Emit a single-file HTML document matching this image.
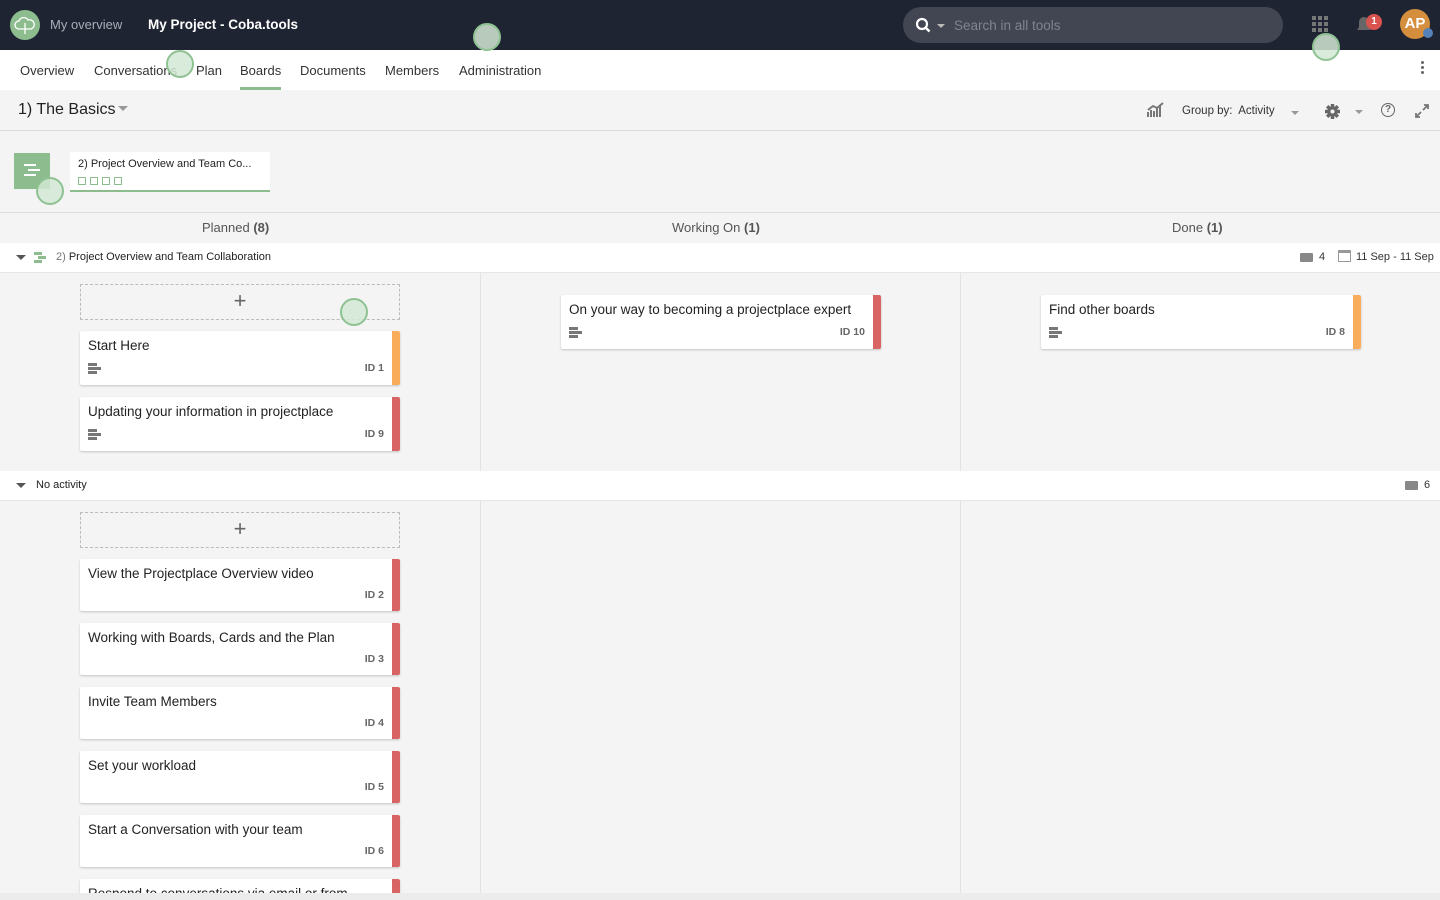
<!DOCTYPE html>
<html style="overflow:hidden;width:1440px;height:900px"><head><meta charset="utf-8"><style>
*{box-sizing:border-box;margin:0;padding:0}
body{width:1440px;height:900px;overflow:hidden;background:#f4f4f4;font-family:"Liberation Sans",sans-serif;color:#222;position:relative}
.abs{position:absolute}
.top{left:0;top:0;width:1440px;height:50px;background:#1f2433}
.tabs{left:0;top:50px;width:1440px;height:40px;background:#fff}
.tabs span{position:absolute;top:13px;font-size:13px;color:#333}
.card{position:absolute;width:320px;background:#fff;box-shadow:0 1px 2px rgba(0,0,0,.2);border-radius:2px}
.card .t{position:absolute;left:8px;top:7px;font-size:13.5px;color:#222}
.card .id{position:absolute;right:16px;font-size:10.5px;font-weight:bold;color:#666}
.card .s{position:absolute;right:0;top:0;bottom:0;width:8px;border-radius:0 2px 2px 0}
.ic{position:absolute;left:8px;width:14px;height:12px}
.ic i{position:absolute;left:0;height:2.5px;background:#777}
.add{position:absolute;left:80px;width:320px;height:36px;border:1px dashed #bbb;text-align:center;font-size:22px;line-height:32px;color:#666;font-weight:300}
.circ{position:absolute;width:28px;height:28px;border-radius:50%;border:2px solid #8fc293;background:rgba(210,232,212,.85)}
.vl{position:absolute;width:1px;background:#e2e2e2}
</style></head><body>
<div class="abs top"></div>
<div class="abs" style="left:10px;top:10px;width:30px;height:30px;border-radius:50%;background:#8dbd8e"></div>
<svg class="abs" style="left:14px;top:15px" width="22" height="20" viewBox="0 0 22 20"><path d="M5 14a4 4 0 0 1 0-8 5 5 0 0 1 9-1 4 4 0 0 1 3 9z M11 8v11" fill="none" stroke="#fff" stroke-width="1.3"/></svg>
<div class="abs" style="left:50px;top:17px;font-size:13px;color:#a9adb6">My overview</div>
<div class="abs" style="left:148px;top:17px;font-size:13.5px;color:#fff;font-weight:bold">My Project - Coba.tools</div>
<div class="abs" style="left:903px;top:7px;width:380px;height:36px;border-radius:18px;background:#424653"></div>
<svg class="abs" style="left:915px;top:17px" width="30" height="18"><circle cx="7" cy="7" r="5" fill="none" stroke="#fff" stroke-width="2.2"/><path d="M10.5 10.5l4 4" stroke="#fff" stroke-width="2.4"/><path d="M22 7h8l-4 4z" fill="#bbb"/></svg>
<div class="abs" style="left:954px;top:18px;font-size:13.5px;color:#80848e">Search in all tools</div>
<svg class="abs" style="left:1312px;top:16px" width="18" height="18"><g fill="#777"><rect x="0" y="0" width="4" height="4"/><rect x="6" y="0" width="4" height="4"/><rect x="12" y="0" width="4" height="4"/><rect x="0" y="6" width="4" height="4"/><rect x="6" y="6" width="4" height="4"/><rect x="12" y="6" width="4" height="4"/><rect x="0" y="12" width="4" height="4"/><rect x="6" y="12" width="4" height="4"/><rect x="12" y="12" width="4" height="4"/></g></svg>
<svg class="abs" style="left:1356px;top:16px" width="16" height="18"><path d="M8 1a5 5 0 0 1 5 5v5l2 3H1l2-3V6a5 5 0 0 1 5-5z" fill="#666"/></svg>
<div class="abs" style="left:1366px;top:14px;width:16px;height:16px;border-radius:50%;background:#d9534f;color:#fff;font-size:10px;font-weight:bold;text-align:center;line-height:16px">1</div>
<div class="abs" style="left:1400px;top:9px;width:30px;height:30px;border-radius:50%;background:#d48e3d;color:#fff;font-size:15px;font-weight:bold;text-align:center;line-height:30px">AP</div>
<div class="abs" style="left:1423px;top:28px;width:10px;height:10px;border-radius:50%;background:#5582b8"></div>

<div class="abs tabs">
<span style="left:20px">Overview</span><span style="left:94px">Conversations</span><span style="left:196px">Plan</span><span style="left:240px">Boards</span><span style="left:300px">Documents</span><span style="left:385px">Members</span><span style="left:459px">Administration</span>
<div class="abs" style="left:240px;top:37px;width:41px;height:3px;background:#8dbd8e"></div>
<div class="abs" style="left:1421px;top:11px;width:3px;height:3px;background:#666;border-radius:50%;box-shadow:0 5px 0 #666,0 10px 0 #666"></div>
</div>
<div class="abs" style="left:0;top:130px;width:1440px;height:1px;background:#ddd"></div>
<div class="abs" style="left:18px;top:101px;font-size:16px;color:#222">1) The Basics</div>
<div class="abs" style="left:118px;top:106px;border:5px solid transparent;border-top-color:#999"></div>
<svg class="abs" style="left:1147px;top:102px" width="18" height="16"><path d="M1 15V10M4 15V8M7 15V9M10 15V6M13 15V4M1 8l5-4 4 2 6-5" stroke="#777" stroke-width="2" fill="none"/></svg>
<div class="abs" style="left:1182px;top:105px;font-size:11.5px;color:#333">Group by:&nbsp; Activity</div>
<div class="abs" style="left:1291px;top:111px;border:4px solid transparent;border-top-color:#999"></div>
<svg class="abs" style="left:1324px;top:103px" width="17" height="17" viewBox="0 0 17 17"><g stroke="#666" stroke-width="3.5"><path d="M8.5 1v15M1 8.5h15M3.2 3.2l10.6 10.6M13.8 3.2L3.2 13.8"/></g><circle cx="8.5" cy="8.5" r="5.2" fill="#666"/><circle cx="8.5" cy="8.5" r="2" fill="#f4f4f4"/></svg>
<div class="abs" style="left:1355px;top:110px;border:4px solid transparent;border-top-color:#999"></div>
<div class="abs" style="left:1381px;top:103px;width:14px;height:14px;border-radius:50%;border:1.5px solid #666;font-size:10px;text-align:center;line-height:11px;color:#666;font-weight:bold">?</div>
<svg class="abs" style="left:1415px;top:104px" width="14" height="14"><path d="M1 13l5-5M8 6l5-5M9 1h4v4M1 9v4h4" stroke="#777" stroke-width="1.8" fill="none"/></svg>

<div class="abs" style="left:14px;top:153px;width:36px;height:36px;background:#8dbd8e"></div>
<div class="abs" style="left:24px;top:164px;width:12px;height:2px;background:#fff;box-shadow:4px 5px 0 #fff,0 10px 0 #fff"></div>
<div class="abs" style="left:70px;top:152px;width:200px;height:40px;background:#fff;border-bottom:2px solid #8dbd8e"></div>
<div class="abs" style="left:78px;top:158px;font-size:11px;color:#222">2) Project Overview and Team Co...</div>
<div class="abs" style="left:78px;top:177px;width:8px;height:8px;border:1px solid #8dbd8e"></div>
<div class="abs" style="left:90px;top:177px;width:8px;height:8px;border:1px solid #8dbd8e"></div>
<div class="abs" style="left:102px;top:177px;width:8px;height:8px;border:1px solid #8dbd8e"></div>
<div class="abs" style="left:114px;top:177px;width:8px;height:8px;border:1px solid #8dbd8e"></div>

<div class="abs" style="left:0;top:212px;width:1440px;height:1px;background:#ddd"></div>
<div class="abs" style="left:202px;top:220px;font-size:13px;color:#555">Planned <b>(8)</b></div>
<div class="abs" style="left:672px;top:220px;font-size:13px;color:#555">Working On <b>(1)</b></div>
<div class="abs" style="left:1172px;top:220px;font-size:13px;color:#555">Done <b>(1)</b></div>

<div class="abs" style="left:0;top:243px;width:1440px;height:30px;background:#fff;border-bottom:1px solid #e6e6e6"></div>
<div class="abs" style="left:16px;top:255px;border:5px solid transparent;border-top-color:#555"></div>
<div class="abs" style="left:34px;top:252px;width:8px;height:2.5px;background:#8dbd8e;box-shadow:4px 4px 0 #8dbd8e,0 8px 0 #8dbd8e"></div>
<div class="abs" style="left:56px;top:251px;font-size:11px;color:#222"><span style="color:#777">2)</span> Project Overview and Team Collaboration</div>
<div class="abs" style="left:1300px;top:253px;width:13px;height:9px;background:#888;border-radius:1px"></div>
<div class="abs" style="left:1319px;top:251px;font-size:11px;color:#333">4</div>
<div class="abs" style="left:1338px;top:250px;width:13px;height:12px;border:1px solid #999;border-top:3px solid #999"></div>
<div class="abs" style="left:1356px;top:251px;font-size:11px;color:#333">11 Sep - 11 Sep</div>

<div class="vl" style="left:480px;top:273px;height:198px"></div>
<div class="vl" style="left:960px;top:273px;height:198px"></div>
<div class="vl" style="left:480px;top:501px;height:392px"></div>
<div class="vl" style="left:960px;top:501px;height:392px"></div>

<div class="add" style="top:284px">+</div>
<div class="card" style="left:80px;top:331px;height:54px"><div class="t">Start Here</div><div class="ic" style="top:32px"><i style="top:0;width:9px"></i><i style="top:4px;width:13px"></i><i style="top:8px;width:9px"></i></div><div class="id" style="top:31px">ID 1</div><div class="s" style="background:#f9ad5a"></div></div>
<div class="card" style="left:80px;top:397px;height:54px"><div class="t">Updating your information in projectplace</div><div class="ic" style="top:32px"><i style="top:0;width:9px"></i><i style="top:4px;width:13px"></i><i style="top:8px;width:9px"></i></div><div class="id" style="top:31px">ID 9</div><div class="s" style="background:#d96464"></div></div>
<div class="card" style="left:561px;top:295px;height:54px"><div class="t">On your way to becoming a projectplace expert</div><div class="ic" style="top:32px"><i style="top:0;width:9px"></i><i style="top:4px;width:13px"></i><i style="top:8px;width:9px"></i></div><div class="id" style="top:31px">ID 10</div><div class="s" style="background:#d96464"></div></div>
<div class="card" style="left:1041px;top:295px;height:54px"><div class="t">Find other boards</div><div class="ic" style="top:32px"><i style="top:0;width:9px"></i><i style="top:4px;width:13px"></i><i style="top:8px;width:9px"></i></div><div class="id" style="top:31px">ID 8</div><div class="s" style="background:#f9ad5a"></div></div>

<div class="abs" style="left:0;top:471px;width:1440px;height:30px;background:#fff;border-bottom:1px solid #e6e6e6"></div>
<div class="abs" style="left:16px;top:483px;border:5px solid transparent;border-top-color:#555"></div>
<div class="abs" style="left:36px;top:479px;font-size:11px;color:#222">No activity</div>
<div class="abs" style="left:1405px;top:481px;width:13px;height:9px;background:#888;border-radius:1px"></div>
<div class="abs" style="left:1424px;top:479px;font-size:11px;color:#333">6</div>

<div class="add" style="top:512px">+</div>
<div class="card" style="left:80px;top:559px;height:52px"><div class="t">View the Projectplace Overview video</div><div class="id" style="top:30px">ID 2</div><div class="s" style="background:#d96464"></div></div>
<div class="card" style="left:80px;top:623px;height:52px"><div class="t">Working with Boards, Cards and the Plan</div><div class="id" style="top:30px">ID 3</div><div class="s" style="background:#d96464"></div></div>
<div class="card" style="left:80px;top:687px;height:52px"><div class="t">Invite Team Members</div><div class="id" style="top:30px">ID 4</div><div class="s" style="background:#d96464"></div></div>
<div class="card" style="left:80px;top:751px;height:52px"><div class="t">Set your workload</div><div class="id" style="top:30px">ID 5</div><div class="s" style="background:#d96464"></div></div>
<div class="card" style="left:80px;top:815px;height:52px"><div class="t">Start a Conversation with your team</div><div class="id" style="top:30px">ID 6</div><div class="s" style="background:#d96464"></div></div>
<div class="card" style="left:80px;top:879px;height:21px;overflow:hidden"><div class="t">Respond to conversations via email or from</div><div class="s" style="background:#d96464"></div></div>
<div class="abs" style="left:0;top:893px;width:1440px;height:7px;background:#ececec;z-index:5"></div>

<div class="circ" style="left:166px;top:50px"></div>
<div class="circ" style="left:473px;top:23px"></div>
<div class="circ" style="left:1312px;top:33px"></div>
<div class="circ" style="left:36px;top:177px"></div>
<div class="circ" style="left:340px;top:298px"></div>
</body></html>
